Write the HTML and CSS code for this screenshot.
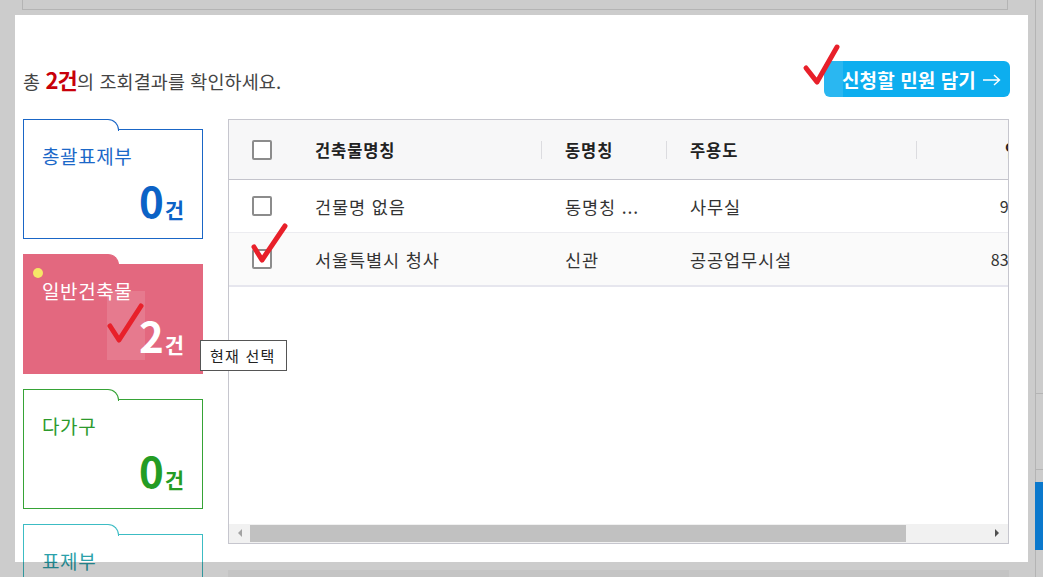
FILE: index.html
```html
<!DOCTYPE html>
<html lang="ko">
<head>
  <meta charset="UTF-8" />
  <meta name="viewport" content="width=device-width, initial-scale=1.0" />
  <title>건축물대장 조회결과</title>
  <link rel="stylesheet" href="styles.css">
</head>
<body>
  <div class="page">
    <div class="content">
      <div class="topbar"></div>
      <div class="main">
        <div class="result-head">
          <p class="result-text">총 <strong>2건</strong>의 조회결과를 확인하세요.</p>
          <button class="btn-apply">신청할 민원 담기
            <svg class="arr" width="19" height="12" viewBox="0 0 19 12"><path d="M1 6 H17.5 M12 1 L17.5 6 L12 11" fill="none" stroke="#fff" stroke-width="1.4" /></svg>
          </button>
        </div>

        <div class="result-body">
          <div class="cards">
            <div class="card blue">
              <div class="card-label">총괄표제부</div>
              <div class="card-count">0<span>건</span></div>
            </div>
            <div class="card pink">
              <span class="dot"></span>
              <div class="card-label">일반건축물</div>
              <div class="card-count">2<span>건</span></div>
            </div>
            <div class="card green">
              <div class="card-label">다가구</div>
              <div class="card-count">0<span>건</span></div>
            </div>
            <div class="card teal">
              <div class="card-label">표제부</div>
              <div class="card-count">0<span>건</span></div>
            </div>
          </div>

          <div class="list-col">
            <div class="grid">
              <div class="grid-body">
                <table>
                  <colgroup>
                    <col style="width:62px">
                    <col style="width:250px">
                    <col style="width:125px">
                    <col style="width:250px">
                    <col style="width:161px">
                    <col style="width:180px">
                  </colgroup>
                  <thead>
                    <tr>
                      <th><span class="chk"></span></th>
                      <th>건축물명칭</th>
                      <th class="sep">동명칭</th>
                      <th class="sep">주용도</th>
                      <th class="sep area">연면적</th>
                      <th class="sep">사용승인일</th>
                    </tr>
                  </thead>
                  <tbody>
                    <tr>
                      <td><span class="chk"></span></td>
                      <td>건물명 없음</td>
                      <td>동명칭 ...</td>
                      <td>사무실</td>
                      <td class="num">9,876.5</td>
                      <td>1985.04.12</td>
                    </tr>
                    <tr class="alt">
                      <td><span class="chk"></span></td>
                      <td>서울특별시 청사</td>
                      <td>신관</td>
                      <td>공공업무시설</td>
                      <td class="num">83,410.2</td>
                      <td>2012.08.29</td>
                    </tr>
                  </tbody>
                </table>
              </div>
              <div class="hscroll">
                <span class="arrow left"></span>
                <span class="thumb"></span>
                <span class="arrow right"></span>
              </div>
            </div>
            <div class="next-section"></div>
          </div>
        </div>
      </div>
    </div>

    <div class="side">
      <div class="side-top"></div>
      <div class="side-box"></div>
      <div class="side-blue"></div>
    </div>
  </div>

  <!-- guide overlay -->
  <div class="spot"></div>
  <svg class="marks" width="1043" height="577" viewBox="0 0 1043 577">
    <rect x="824" y="61" width="19" height="36" fill="rgba(255,255,255,0.12)" />
    <rect x="107" y="291" width="38" height="69" fill="rgba(255,255,255,0.12)" />
    <g fill="none" stroke="#e8202a" stroke-linecap="round" stroke-linejoin="round">
      <path d="M806 68 L817 82 L837 47" stroke-width="5" />
      <path d="M254 247 L262 260 L285 226" stroke-width="5" />
      <path d="M110 326 L119 340 L141 306" stroke-width="5" />
    </g>
  </svg>
  <div class="tip">현재 선택</div>
</body>
</html>
```

FILE: styles.css
```css
body {
  margin: 0;
  height: 577px;
  overflow: hidden;
  position: relative;
  background: #fff;
  font-family: "Noto Sans CJK KR", "Noto Sans", sans-serif;
  color: #333;
}

.page {
  display: flex;
  height: 577px;
}

.content {
  width: 1028px;
  flex: none;
}

.topbar {
  margin-left: 22px;
  width: 986px;
  height: 10px;
  border: 1px solid #e2e2e2;
  border-top: none;
  box-sizing: border-box;
}

.main {
  margin: 5px 0 0 15px;
  width: 1013px;
  padding: 46px 18px 0 8px;
  box-sizing: border-box;
}

.result-head {
  display: flex;
  justify-content: space-between;
  align-items: center;
  height: 36px;
}

.result-text {
  margin: 0;
  font-size: 18.5px;
  color: #444;
  letter-spacing: 0.1px;
}

.result-text strong {
  color: #c8000a;
  font-size: 22px;
  letter-spacing: -0.8px;
}

.btn-apply {
  display: flex;
  align-items: center;
  gap: 6px;
  width: 186px;
  height: 36px;
  padding: 0 0 0 18px;
  background: #0daeef;
  color: #fff;
  border: none;
  border-radius: 6px;
  font-family: inherit;
  font-size: 19px;
  font-weight: bold;
  letter-spacing: 0.1px;
  white-space: nowrap;
}

.btn-apply .arr {
  flex: none;
  margin-top: 1px;
}

.result-body {
  display: flex;
  gap: 25px;
  margin-top: 22px;
}

/* category cards */
.cards {
  width: 180px;
  flex: none;
  display: flex;
  flex-direction: column;
  gap: 15px;
}

.card {
  position: relative;
  margin-top: 10px;
  height: 110px;
  flex: none;
  box-sizing: border-box;
  border: 1px solid var(--line);
  background: #fff;
  padding: 15px 19px 0 18px;
  color: var(--txt);
}

.card::before {
  content: "";
  position: absolute;
  top: -11px;
  left: -1px;
  width: 94px;
  height: 11px;
  border: 1px solid var(--line);
  border-bottom: none;
  border-top-right-radius: 11px;
  background: inherit;
}

.card.blue { --line: #1a66c6; --txt: #1b68c8; }
.card.pink { --line: #e3687f; --txt: #fff; background: #e3687f; }
.card.green { --line: #36a336; --txt: #2c9a2c; }
.card.teal { --line: #3cbcc4; --txt: #2ba1aa; }

.card-label {
  font-size: 19px;
  line-height: 22px;
  letter-spacing: 0.6px;
}

.card-count {
  margin-top: 12px;
  text-align: right;
  font-size: 42px;
  line-height: 42px;
  font-weight: bold;
  letter-spacing: -1px;
}

.card-count span {
  font-size: 21px;
  margin-left: 2px;
}

.card.blue .card-count { color: #0c62c6; }
.card.green .card-count { color: #249c24; }

.dot {
  position: absolute;
  top: 3px;
  left: 9px;
  width: 10px;
  height: 10px;
  border-radius: 50%;
  background: #f6e767;
}

/* result list */
.list-col {
  width: 781px;
  flex: none;
}

.grid {
  height: 425px;
  border: 1px solid #c6c6ce;
  box-sizing: border-box;
  display: flex;
  flex-direction: column;
  background: #fff;
}

.grid-body {
  flex: 1;
  overflow: hidden;
}

.grid table {
  width: 1028px;
  border-collapse: collapse;
  table-layout: fixed;
}

.grid th,
.grid td {
  padding: 0 0 0 24px;
  text-align: left;
  white-space: nowrap;
  overflow: hidden;
}

.grid th {
  position: relative;
  height: 59px;
  background: #f7f7f8;
  border-bottom: 1px solid #c4c4cc;
  font-size: 16.5px;
  font-weight: bold;
  color: #222;
  letter-spacing: 0.9px;
}

.grid th:first-child,
.grid td:first-child {
  padding-left: 23px;
}

.grid th.sep::before {
  content: "";
  position: absolute;
  left: 0;
  top: 21px;
  width: 1px;
  height: 18px;
  background: #dcdce0;
}

.grid th.area {
  padding-left: 89px;
}

.grid td {
  height: 52px;
  border-bottom: 1px solid #ececf0;
  font-size: 17.5px;
  color: #333;
  letter-spacing: 0.9px;
}

.grid tr.alt td {
  background: #fafafa;
  border-bottom: 2px solid #e6e6ee;
}

.grid td.num {
  text-align: right;
  padding: 0 24px 0 0;
  font-size: 16px;
  letter-spacing: 0;
}

.chk {
  display: block;
  width: 20px;
  height: 20px;
  box-sizing: border-box;
  border: 2px solid #8c8c8c;
  border-radius: 2px;
  background: #fff;
}

.hscroll {
  position: relative;
  height: 19px;
  background: #f1f1f1;
  flex: none;
}

.thumb {
  position: absolute;
  left: 21px;
  top: 1px;
  width: 656px;
  height: 17px;
  background: #c1c1c1;
}

.arrow {
  position: absolute;
  top: 5px;
  width: 0;
  height: 0;
  border-top: 4px solid transparent;
  border-bottom: 4px solid transparent;
}

.arrow.left {
  left: 9px;
  border-right: 4px solid #a3a3a3;
}

.arrow.right {
  right: 9px;
  border-left: 4px solid #505050;
}

.next-section {
  margin-top: 26px;
  height: 40px;
  background: #f5f5f5;
}

/* right edge of the page behind the guide */
.side {
  margin-left: 7px;
  flex: 1;
  border-left: 1px solid #e2e2e2;
}

.side-top {
  height: 393px;
  border-bottom: 1px solid #e2e2e2;
}

.side-box {
  height: 75px;
  border-bottom: 1px solid #e2e2e2;
}

.side-blue {
  margin: 12px 0 0 -1px;
  height: 68px;
  background: #0d96ff;
}

/* guide overlay */
.spot {
  position: absolute;
  left: 15px;
  top: 15px;
  width: 1013px;
  height: 547px;
  box-shadow: 0 0 0 2000px rgba(0, 0, 0, 0.2);
  pointer-events: none;
}

.marks {
  position: absolute;
  left: 0;
  top: 0;
  pointer-events: none;
}

.tip {
  position: absolute;
  left: 200px;
  top: 340px;
  width: 87px;
  height: 31px;
  box-sizing: border-box;
  border: 1px solid #555;
  background: #fff;
  font-size: 15px;
  line-height: 29px;
  letter-spacing: 1.2px;
  padding-left: 9px;
  color: #222;
  white-space: nowrap;
}
```
